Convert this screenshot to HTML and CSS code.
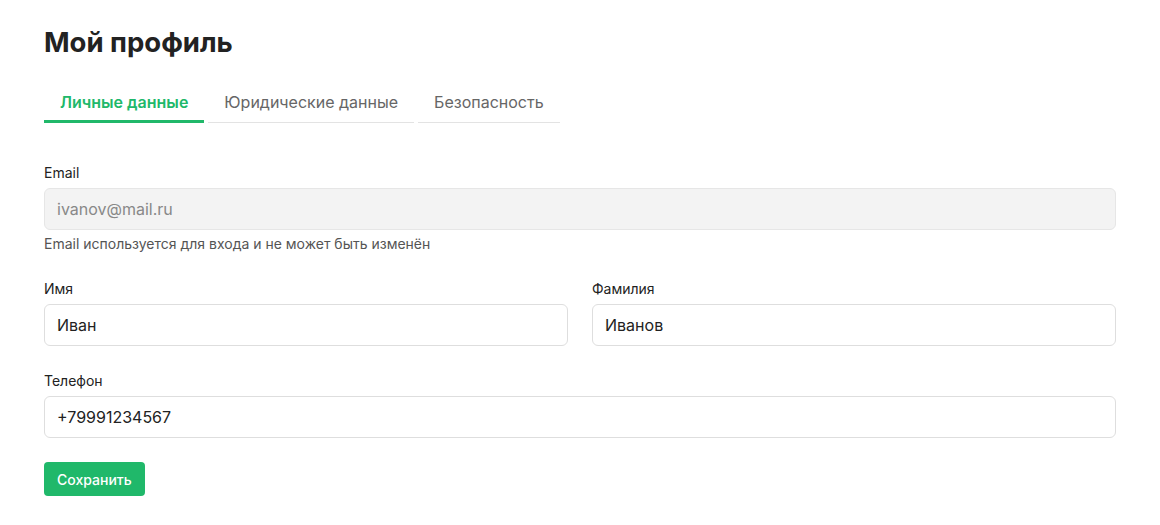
FILE: index.html
```html
<!DOCTYPE html>
<html lang="ru">
<head>
<meta charset="utf-8">
<title>Мой профиль</title>
<link rel="stylesheet" href="styles.css">
</head>
<body>
<main class="page">
  <h1 class="title">Мой профиль</h1>
  <nav class="tabs">
    <div class="tab active">Личные данные</div>
    <div class="tab">Юридические данные</div>
    <div class="tab">Безопасность</div>
  </nav>
  <form class="form">
    <div class="field">
      <label class="label">Email</label>
      <input class="input disabled" type="text" value="ivanov@mail.ru" disabled>
      <div class="hint">Email используется для входа и не может быть изменён</div>
    </div>
    <div class="row">
      <div class="field">
        <label class="label">Имя</label>
        <input class="input" type="text" value="Иван">
      </div>
      <div class="field">
        <label class="label">Фамилия</label>
        <input class="input" type="text" value="Иванов">
      </div>
    </div>
    <div class="field">
      <label class="label">Телефон</label>
      <input class="input" type="text" value="+79991234567">
    </div>
    <div class="actions">
      <button class="btn" type="button">Сохранить</button>
    </div>
  </form>
</main>
</body>
</html>
```
FILE: styles.css
```css
* { box-sizing: border-box; }
html, body { margin: 0; padding: 0; background: #fff; }
body {
  font-family: Inter, "Noto Sans", "Liberation Sans", sans-serif;
  color: #222;
}
.page {
  padding: 24px 44px;
}
.title {
  margin: 0;
  font-size: 27.5px;
  line-height: 36px;
  font-weight: 700;
  color: #222;
}
.tabs {
  display: flex;
  align-items: flex-end;
  gap: 4px;
  margin-top: 30px;
}
.tab {
  padding: 0 16px 8px;
  font-size: 16px;
  line-height: 24px;
  color: #666;
  border-bottom: 1px solid #e3e3e3;
  font-weight: 400;
}
.tab.active {
  color: #20b86a;
  font-weight: 600;
  border-bottom: 3px solid #20b86a;
  padding: 0 16px 6px 16px;
}
.form {
  margin-top: 41px;
  display: flex;
  flex-direction: column;
  gap: 26px;
}
.field {
  display: flex;
  flex-direction: column;
}
.label {
  font-size: 14px;
  line-height: 18px;
  color: #222;
  margin-bottom: 6px;
  font-weight: 400;
}
.input {
  height: 42px;
  border: 1px solid #dedede;
  border-radius: 6px;
  padding: 0 12px;
  font-family: inherit;
  font-size: 16px;
  color: #222;
  background: #fff;
  width: 100%;
}
.input.disabled {
  background: #f3f3f3;
  border-color: #e6e6e6;
  color: #888;
}
.hint {
  margin-top: 5px;
  font-size: 14px;
  line-height: 18px;
  color: #555;
}
.row {
  display: grid;
  grid-template-columns: 1fr 1fr;
  gap: 24px;
  margin-top: 1px;
}
.actions {
  display: flex;
  margin-top: -2px;
}
.btn {
  height: 34px;
  padding: 0 13px;
  background: #20b86a;
  color: #fff;
  border: none;
  border-radius: 4px;
  font-family: inherit;
  font-size: 14px;
  font-weight: 500;
}
```
